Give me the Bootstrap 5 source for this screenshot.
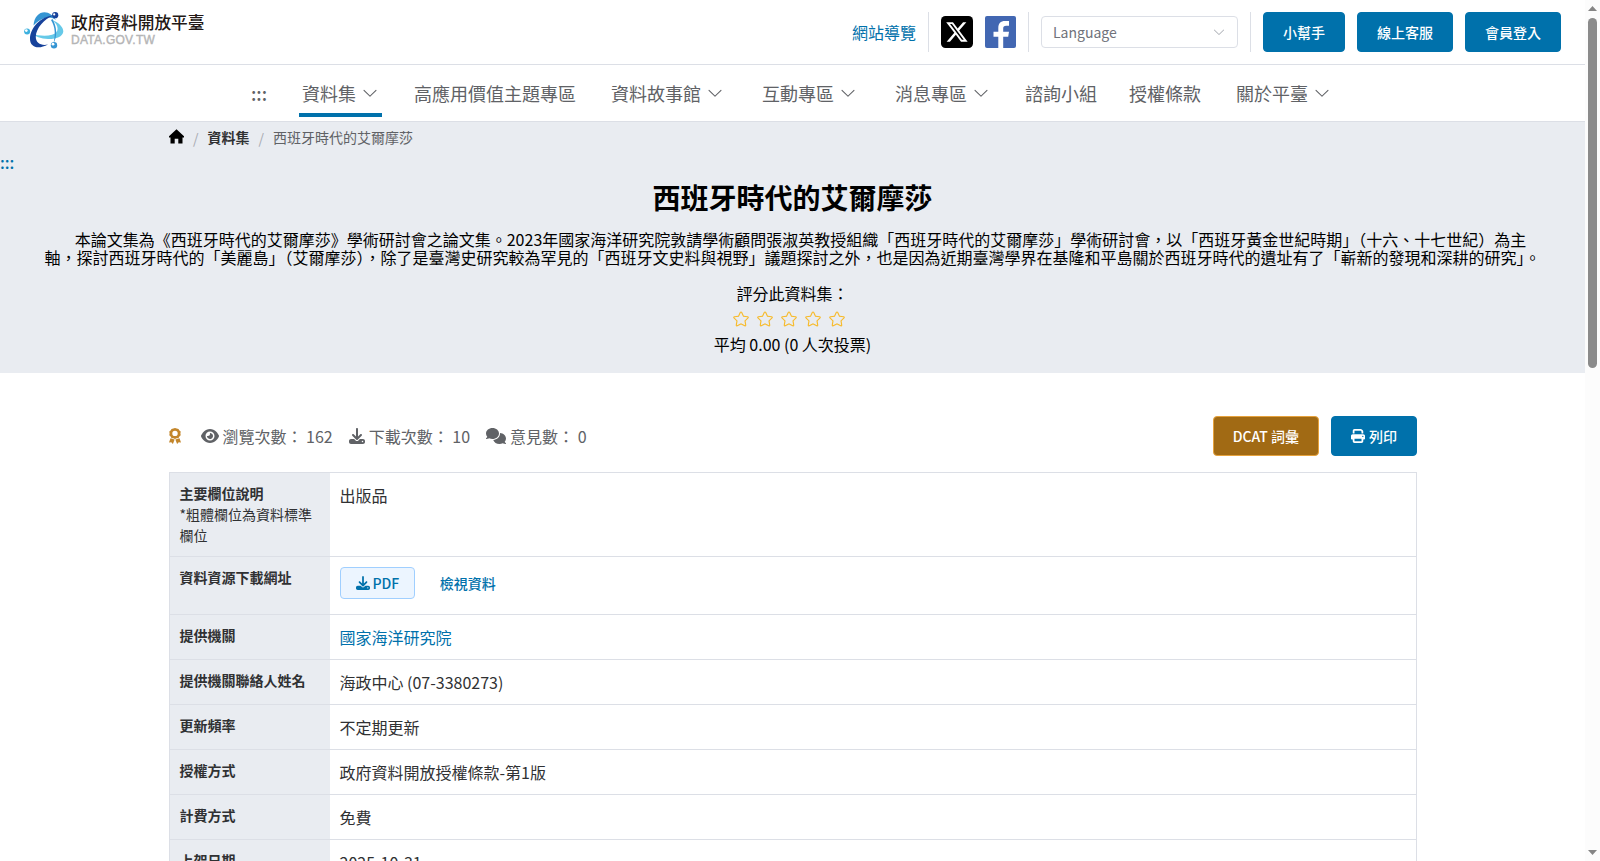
<!DOCTYPE html>
<html lang="zh-Hant-TW">
<head>
<meta charset="utf-8">
<meta name="viewport" content="width=device-width, initial-scale=1">
<title>西班牙時代的艾爾摩莎 | 政府資料開放平臺</title>
<link href="https://cdn.jsdelivr.net/npm/bootstrap@5.3.0/dist/css/bootstrap.min.css" rel="stylesheet">
<style>
  :root { --brand: #0071ab; --line: #dcdfe6; --soft: #e9ecf1; --ink: #303133; --muted: #606266; }
  html, body { height: 100%; overflow: hidden; }
  body { font-family: "Noto Sans CJK TC", sans-serif; font-size: 16px; line-height: 24px; color: var(--ink); }
  a { text-decoration: none; color: var(--brand); }
  svg { fill: currentColor; flex: none; }
  .viewport { height: 861px; }
  .page-main { width: 1585px; height: 861px; }

  .topbar { height: 65px; border-bottom: 1px solid var(--line); padding: 0 24px; }
  .brand-name { font-size: 16.7px; font-weight: 500; line-height: 21px; color: #231815; white-space: nowrap; }
  .brand-url { font-family: "Liberation Sans", sans-serif; font-size: 12px; line-height: 14px; letter-spacing: .27px; color: #b5b5b6; -webkit-text-stroke: .4px #b5b5b6; }
  .rule { width: 1px; height: 40px; background: var(--line); }
  .lang-box { width: 197px; height: 32px; border: 1px solid var(--line); border-radius: 4px; padding: 0 11px; font-size: 14px; color: #70727a; }
  .lang-box svg { color: #a8abb2; }
  .btn-brand { --bs-btn-color: #fff; --bs-btn-bg: var(--brand); --bs-btn-border-color: var(--brand); --bs-btn-hover-color: #fff; --bs-btn-hover-bg: #005f90; height: 40px; padding: 0 19px; font-size: 14px; font-weight: 500; line-height: 38px; border-radius: 4px; white-space: nowrap; }
  .btn-dcat { --bs-btn-bg: #a16a14; --bs-btn-border-color: #e6a23c; }

  .main-menu { height: 57px; border-bottom: 1px solid var(--line); font-size: 18px; gap: 32px; }
  .main-menu a { color: var(--muted); height: 52px; border-bottom: 4px solid transparent; padding-top: 8px; white-space: nowrap; }
  .main-menu .has-sub { padding-left: 3px; padding-right: 3px; gap: 5px; }
  .main-menu .current { border-bottom-color: var(--brand); }

  .hero { height: 251px; background: var(--soft); color: #000; }
  .page-box { width: 1248px; margin-left: 169px; }
  .crumbs { height: 28px; font-size: 14px; padding-top: 1px; }
  .crumbs .sep { color: #a8abb2; margin: 2px 9px 0; }
  .hero h1 { font-size: 28px; line-height: 40px; font-weight: 700; margin: 3px 0 0; }
  .hero .intro { line-height: 18px; margin: 13px 0 15px; white-space: nowrap; }
  .hero .rate-label { height: 29px; }
  .stars { color: #f7ba2a; gap: 6px; height: 18px; padding-right: 8px; }

  .stats { height: 40px; margin-top: 43px; margin-bottom: 16px; color: var(--muted); }
  .facts { border: 1px solid var(--line); border-bottom: 0; }
  .facts dt { width: 160px; padding: 10px 9px 10px 9.5px; background: var(--soft); font-size: 14px; line-height: 21px; font-weight: 700; border-bottom: 1px solid var(--line); }
  .facts dd { margin: 0; padding: 10px 10px 10px 9.5px; border-bottom: 1px solid var(--line); }
  .btn-file { height: 32px; padding: 0 14.5px 0 15px; font-size: 14px; font-weight: 500; line-height: 30px; color: var(--brand); background: #ecf5ff; border: 1px solid #a0cfff; border-radius: 4px; }

  .scroll-rail { width: 15px; background: #fcfcfc; color: #858585; padding: 6px 0; }
  .scroll-rail .thumb { width: 9px; height: 350px; border-radius: 5px; background: #8b8b8b; margin-top: 7px; }
</style>
</head>
<body>
<svg width="0" height="0" class="position-absolute" aria-hidden="true">
  <defs>
    <symbol id="chevron" viewBox="0 0 1024 1024"><path d="M831.872 340.864 512 652.672 192.128 340.864a30.592 30.592 0 0 0-42.752 0 29.12 29.12 0 0 0 0 41.6L489.664 714.24a32 32 0 0 0 44.672 0l340.288-331.712a29.12 29.12 0 0 0 0-41.728 30.592 30.592 0 0 0-42.752 0z"/></symbol>
    <symbol id="star" viewBox="0 0 1024 1024"><path d="m512 747.84 228.16 119.936a6.4 6.4 0 0 0 9.28-6.72l-43.52-254.08 184.512-179.904a6.4 6.4 0 0 0-3.52-10.88l-255.104-37.12L517.76 147.904a6.4 6.4 0 0 0-11.52 0L392.192 379.072l-255.104 37.12a6.4 6.4 0 0 0-3.52 10.88L318.08 606.976l-43.584 254.08a6.4 6.4 0 0 0 9.28 6.72L512 747.84zM313.6 924.48a70.4 70.4 0 0 1-102.144-74.24l37.888-220.928L88.96 472.96A70.4 70.4 0 0 1 128 352.896l221.76-32.256 99.2-200.96a70.4 70.4 0 0 1 126.208 0l99.2 200.96 221.824 32.256a70.4 70.4 0 0 1 39.04 120.064L774.72 629.376l37.888 220.8a70.4 70.4 0 0 1-102.144 74.24L512 820.096l-198.4 104.32z"/></symbol>
    <symbol id="download" viewBox="0 0 512 512"><path d="M288 32c0-17.7-14.3-32-32-32s-32 14.3-32 32V274.7l-73.4-73.4c-12.5-12.5-32.8-12.5-45.3 0s-12.5 32.8 0 45.3l128 128c12.5 12.5 32.8 12.5 45.3 0l128-128c12.5-12.5 12.5-32.8 0-45.3s-32.8-12.5-45.3 0L288 274.7V32zM64 352c-35.3 0-64 28.7-64 64v32c0 35.3 28.7 64 64 64H448c35.3 0 64-28.7 64-64V416c0-35.3-28.7-64-64-64H346.5l-45.3 45.3c-25 25-65.5 25-90.5 0L165.5 352H64zm368 56a24 24 0 1 1 0 48 24 24 0 1 1 0-48z"/></symbol>
  </defs>
</svg>
<div class="viewport d-flex">
  <div class="page-main overflow-hidden">
    <header>
      <div class="topbar d-flex align-items-center justify-content-between">
        <a href="#" class="d-flex align-items-start pb-1" style="gap:7px">
          <svg width="40" height="37" viewBox="0 0 40 37">
            <path d="M9.500 13.500C10 5 15 .3 20.500 .3C25 .3 29 3.500 32 8C28 5.500 25 5 21 6C16 7.200 13 10 9.500 13.500Z" fill="#3595d3"/>
            <path d="M28 8C34 10 39.500 15 39.300 19.500C39 25 31 27.300 24 27C17 26.700 11 24.500 7 21.500C14 23.800 22 24.500 28 22.800C36 20.500 35 13 28 8Z" fill="#66c9e8"/>
            <path d="M29.500 3.500C17 4 6 16 6 27C6 35 14 38 24 32.500C17 34 11.500 31 11.800 24.500C12.200 16 20 7 29.500 3.500Z" fill="#17429b"/>
            <path d="M28.500 7C33 15 33.500 24 29.500 31.500C31.500 23 31.500 15 27 8Z" fill="#3595d3"/>
            <circle cx="31.200" cy="3.200" r="3.100" fill="#17429b"/><circle cx="30.200" cy="2.400" r="1.100" fill="#fff"/>
            <circle cx="3.100" cy="19.500" r="3" fill="#3db1df"/><circle cx="2.300" cy="18.600" r="1.400" fill="#fff"/>
            <circle cx="30" cy="33.200" r="3.200" fill="#3595d3"/><circle cx="29" cy="32.200" r="1.400" fill="#fff"/>
          </svg>
          <span class="d-block"><span class="brand-name d-block">政府資料開放平臺</span><span class="brand-url d-block">DATA.GOV.TW</span></span>
        </a>
        <div class="d-flex align-items-center" style="gap:12px">
          <a href="#">網站導覽</a>
          <span class="rule"></span>
          <svg width="32" height="32" viewBox="0 0 32 32"><rect width="32" height="32" rx="4.500" fill="#000"/><path transform="translate(5.200 5.200) scale(1.340)" fill="#fff" d="M12.600.75h2.454l-5.360 6.142L16 15.250h-4.937l-3.867-5.070-4.425 5.070H.316l5.733-6.570L0 .75h5.063l3.495 4.633L12.601.75Zm-.86 13.028h1.360L4.323 2.145H2.865z"/></svg>
          <svg width="31" height="32" viewBox="0 0 31 32"><rect width="31" height="32" rx="2" fill="#4267b2"/><path fill="#fff" d="M13.300 32V20.700H8.500V15.700H13.300V12C13.300 7.400 15.600 5 20 5H24V9.700H21.200C19 9.700 18.200 10.500 18.200 12.500V15.700H24L23.200 20.700H18.200V32Z"/></svg>
          <span class="rule"></span>
          <div class="lang-box d-flex align-items-center justify-content-between"><span>Language</span><svg width="14" height="14"><use href="#chevron"/></svg></div>
          <span class="rule"></span>
          <button class="btn btn-brand">小幫手</button>
          <button class="btn btn-brand">線上客服</button>
          <button class="btn btn-brand">會員登入</button>
        </div>
      </div>
      <nav class="main-menu d-flex justify-content-center">
        <a href="#" class="d-flex align-items-center fw-medium">:::</a>
        <a href="#" class="d-flex align-items-center has-sub current">資料集<svg width="18" height="18"><use href="#chevron"/></svg></a>
        <a href="#" class="d-flex align-items-center">高應用價值主題專區</a>
        <a href="#" class="d-flex align-items-center has-sub">資料故事館<svg width="18" height="18"><use href="#chevron"/></svg></a>
        <a href="#" class="d-flex align-items-center has-sub">互動專區<svg width="18" height="18"><use href="#chevron"/></svg></a>
        <a href="#" class="d-flex align-items-center has-sub">消息專區<svg width="18" height="18"><use href="#chevron"/></svg></a>
        <a href="#" class="d-flex align-items-center">諮詢小組</a>
        <a href="#" class="d-flex align-items-center">授權條款</a>
        <a href="#" class="d-flex align-items-center has-sub">關於平臺<svg width="18" height="18"><use href="#chevron"/></svg></a>
      </nav>
    </header>

    <section class="hero">
      <div class="page-box crumbs d-flex align-items-center">
        <svg width="15" height="15" viewBox="0 0 15 15" fill="#000"><path d="M7.500 .3L15 7.200V8.500H13.500V14.500H9.300V9.700H5.700V14.500H1.500V8.500H0V7.200Z"/></svg>
        <span class="sep">/</span><a href="#" class="fw-bold" style="color:#303133">資料集</a><span class="sep">/</span><span style="color:#606266">西班牙時代的艾爾摩莎</span>
      </div>
      <a href="#" class="d-block" style="font-weight:500">:::</a>
      <div class="text-center">
        <h1>西班牙時代的艾爾摩莎</h1>
        <p class="intro">　本論文集為《西班牙時代的艾爾摩莎》學術研討會之論文集。2023年國家海洋研究院敦請學術顧問張淑英教授組織「西班牙時代的艾爾摩莎」學術研討會，以「西班牙黃金世紀時期」（十六、十七世紀）為主<br>軸，探討西班牙時代的「美麗島」（艾爾摩莎），除了是臺灣史研究較為罕見的「西班牙文史料與視野」議題探討之外，也是因為近期臺灣學界在基隆和平島關於西班牙時代的遺址有了「嶄新的發現和深耕的研究」。</p>
        <div class="rate-label">評分此資料集：</div>
        <div class="stars d-flex justify-content-center">
          <svg width="18" height="18"><use href="#star"/></svg><svg width="18" height="18"><use href="#star"/></svg><svg width="18" height="18"><use href="#star"/></svg><svg width="18" height="18"><use href="#star"/></svg><svg width="18" height="18"><use href="#star"/></svg>
        </div>
        <div class="pt-1">平均 0.00 (0 人次投票)</div>
      </div>
    </section>

    <main class="page-box">
      <div class="stats d-flex align-items-center justify-content-between">
        <div class="d-flex align-items-center" style="gap:16px">
          <svg width="12" height="16" viewBox="0 0 12 16" style="color:#c3862b;margin-right:3.500px"><path fill-rule="evenodd" d="M6 0L7.700 .6L9.500 .9L10.400 2.400L11.700 3.600L11.400 5.400L11.700 7.200L10.400 8.400L9.500 9.900L7.700 10.200L6 11L4.300 10.200L2.500 9.900L1.600 8.400L.3 7.200L.6 5.400L.3 3.600L1.600 2.400L2.500 .9L4.300 .6ZM6 2.700A2.700 2.700 0 1 0 6 8.100A2.700 2.700 0 1 0 6 2.700ZM1.500 10.300L5.600 11.600L3.900 16L2.300 14.300L0 14.600ZM10.500 10.300L6.400 11.600L8.100 16L9.700 14.300L12 14.600Z"/></svg>
          <span class="d-flex align-items-center" style="gap:4px"><svg width="18" height="16" viewBox="0 0 576 512"><path d="M288 32c-80.800 0-145.500 36.800-192.600 80.600C48.600 156 17.300 208 2.500 243.700c-3.300 7.900-3.300 16.700 0 24.600C17.300 304 48.600 356 95.400 399.400C142.500 443.200 207.200 480 288 480s145.500-36.800 192.600-80.600c46.800-43.500 78.100-95.400 93-131.100c3.300-7.900 3.300-16.700 0-24.600c-14.900-35.700-46.200-87.700-93-131.100C433.500 68.800 368.800 32 288 32zM144 256a144 144 0 1 1 288 0 144 144 0 1 1 -288 0zm144-64c0 35.300-28.700 64-64 64c-7.100 0-13.900-1.200-20.300-3.300c-5.500-1.800-11.900 1.600-11.700 7.400c.3 6.900 1.300 13.800 3.200 20.700c13.700 51.200 66.400 81.600 117.600 67.900s81.600-66.400 67.900-117.600c-11.100-41.500-47.800-69.400-88.600-71.100c-5.800-.2-9.200 6.100-7.400 11.700c2.100 6.400 3.300 13.200 3.300 20.300z"/></svg><span>瀏覽次數： 162</span></span>
          <span class="d-flex align-items-center" style="gap:4px"><svg width="16" height="16"><use href="#download"/></svg><span>下載次數： 10</span></span>
          <span class="d-flex align-items-center" style="gap:4px"><svg width="20" height="16" viewBox="0 0 640 512"><path d="M208 352c114.900 0 208-78.800 208-176S322.900 0 208 0S0 78.800 0 176c0 38.600 14.700 74.300 39.600 103.400c-3.500 9.400-8.700 17.700-14.200 24.700c-4.800 6.200-9.700 11-13.300 14.300c-1.800 1.600-3.300 2.900-4.300 3.700c-.5 .4-.9 .7-1.100 .8l-.2 .2C1 327.200-1.400 334.400 .8 340.900S9.100 352 16 352c21.800 0 43.800-5.600 62.100-12.500c9.200-3.500 17.800-7.400 25.200-11.400C134.100 343.300 169.800 352 208 352zM448 176c0 112.300-99.100 196.900-216.500 207C255.800 457.400 336.400 512 432 512c38.200 0 73.900-8.700 104.700-23.900c7.500 4 16 7.900 25.200 11.400c18.300 6.900 40.300 12.500 62.100 12.500c6.900 0 13.100-4.500 15.200-11.100c2.100-6.600-.2-13.800-5.800-17.900l-.2-.2c-.2-.2-.6-.4-1.100-.8c-1-.8-2.500-2-4.300-3.700c-3.600-3.300-8.500-8.100-13.300-14.300c-5.500-7-10.700-15.400-14.200-24.700c24.900-29 39.600-64.700 39.600-103.400c0-92.800-84.900-168.900-192.600-175.500c.4 5.100 .6 10.300 .6 15.500z"/></svg><span>意見數： 0</span></span>
        </div>
        <div class="d-flex" style="gap:12px">
          <button class="btn btn-brand btn-dcat">DCAT 詞彙</button>
          <button class="btn btn-brand d-flex align-items-center" style="gap:4px"><svg width="14" height="14" viewBox="0 0 512 512"><path d="M128 0C92.700 0 64 28.700 64 64v96h64V64H354.700L384 93.300V160h64V93.300c0-17-6.700-33.300-18.700-45.300L400 18.700C388 6.700 371.700 0 354.700 0H128zM384 352v32 64H128V384 368 352H384zm64 32h32c17.700 0 32-14.300 32-32V256c0-35.300-28.700-64-64-64H64c-35.300 0-64 28.700-64 64v96c0 17.700 14.300 32 32 32H64v64c0 35.300 28.700 64 64 64H384c35.300 0 64-28.700 64-64V384zM432 248a24 24 0 1 1 0 48 24 24 0 1 1 0-48z"/></svg>列印</button>
        </div>
      </div>

      <dl class="facts mb-0">
        <div class="d-flex"><dt>主要欄位說明<br><span class="fw-normal">*粗體欄位為資料標準欄位</span></dt><dd class="flex-fill">出版品</dd></div>
        <div class="d-flex"><dt>資料資源下載網址</dt><dd class="flex-fill d-flex align-items-start" style="height:58px;gap:25px"><button class="btn-file d-flex align-items-center" style="gap:3px"><svg width="14" height="14"><use href="#download"/></svg>PDF</button><a href="#" style="font-size:14px;font-weight:500;line-height:32px">檢視資料</a></dd></div>
        <div class="d-flex"><dt>提供機關</dt><dd class="flex-fill"><a href="#">國家海洋研究院</a></dd></div>
        <div class="d-flex"><dt>提供機關聯絡人姓名</dt><dd class="flex-fill">海政中心 (07-3380273)</dd></div>
        <div class="d-flex"><dt>更新頻率</dt><dd class="flex-fill">不定期更新</dd></div>
        <div class="d-flex"><dt>授權方式</dt><dd class="flex-fill">政府資料開放授權條款-第1版</dd></div>
        <div class="d-flex"><dt>計費方式</dt><dd class="flex-fill">免費</dd></div>
        <div class="d-flex"><dt>上架日期</dt><dd class="flex-fill">2025-10-31</dd></div>
      </dl>
    </main>
  </div>
  <div class="scroll-rail d-flex flex-column align-items-center">
    <svg width="9" height="5" viewBox="0 0 9 5"><path d="M4.500 0L9 5H0Z"/></svg>
    <div class="thumb"></div>
    <svg class="mt-auto" width="9" height="5" viewBox="0 0 9 5"><path d="M4.500 5L9 0H0Z"/></svg>
  </div>
</div>
<script src="https://cdn.jsdelivr.net/npm/bootstrap@5.3.0/dist/js/bootstrap.bundle.min.js"></script>
</body>
</html>
